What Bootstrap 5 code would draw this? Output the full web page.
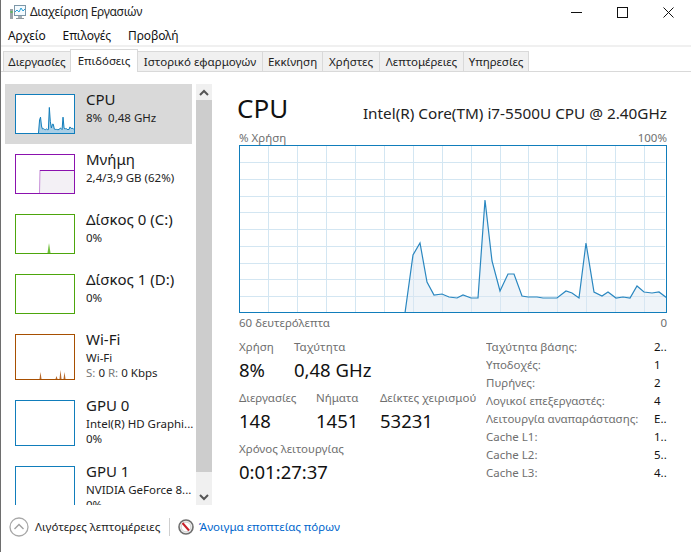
<!DOCTYPE html>
<html lang="el">
<head>
<meta charset="utf-8">
<title>Διαχείριση Εργασιών</title>
<link href="https://cdn.jsdelivr.net/npm/bootstrap@5.3.0/dist/css/bootstrap.min.css" rel="stylesheet">
<style>
html,body{margin:0;height:552px;overflow:hidden;background:#fff}
body{font-family:"Noto Sans","Open Sans","Liberation Sans",sans-serif;font-size:11.5px;line-height:16px;color:#111}
.tm-win{width:691px;height:552px;border-left:1px solid #6e6e6e;background:#fff;overflow:hidden}
.tm-title{height:26px;padding:0 0 2px 9px}
.tm-title-text{margin-left:4px;color:#222;font-size:12px;letter-spacing:-.3px}
.tm-ctl{width:46px;height:23px}
.tm-menu{height:19px;padding-left:7px;gap:17px;font-size:12px;letter-spacing:-.1px}
.tm-menu-sep{height:2px;background:#f0f0f0}
.tm-tabs{height:25px;padding-left:2px;align-items:flex-end;border-bottom:1px solid #d9d9d9;flex-wrap:nowrap}
.tm-tab{height:20px;background:#f0f0f0;border:1px solid #d9d9d9;border-bottom:0;margin-left:-1px;text-align:center;line-height:19px;color:#222;white-space:nowrap;overflow:hidden}
.tm-tab:nth-child(1){width:68px;margin-left:0}
.tm-tab:nth-child(2){width:68px;height:23px;background:#fff;margin-bottom:-1px;line-height:21px;position:relative}
.tm-tab:nth-child(3){width:126px}
.tm-tab:nth-child(4){width:61px}
.tm-tab:nth-child(5){width:58px}
.tm-tab:nth-child(6){width:85px}
.tm-tab:nth-child(7){width:66px}
.tm-body{height:433px}
.tm-side{width:195px;height:433px;padding:12px 0 0 4px;overflow:hidden;flex:none}
.tm-row{height:60px;padding:10px 0 0 10px;gap:11px;width:187px;flex:none}
.tm-row-tall{height:66px}
.tm-row-on{background:#d9d9d9}
.tm-thumb{width:60px;height:40px;border:1px solid;flex:none;display:block;background:#fff}
.tm-row-tall .tm-thumb{height:46px}
.tm-t-cpu,.tm-t-gpu{border-color:#117dbb}
.tm-t-mem{border-color:#8b12ae}
.tm-t-disk{border-color:#4da60c}
.tm-t-net{border-color:#a74f01}
.tm-info{margin-top:-5px;min-width:0;white-space:nowrap}
.tm-name{font-size:15px;line-height:21px;color:#1a1a1a}
.tm-sub{line-height:15px;color:#222}
.tm-mute{color:#777}
.tm-bar{width:16px;height:421px;margin-top:12px;background:#f0f0f0;flex:none}
.tm-bar-btn{height:16px}
.tm-bar-thumb{height:372px;background:#cdcdcd}
.tm-main{padding:18px 0 0 27px;width:455px;flex:none}
.tm-h{height:36px;align-items:center}
.tm-cpu{font-size:26px;line-height:36px;margin-left:-2px;color:#111}
.tm-model{font-size:15.3px;line-height:20px;color:#222;margin-top:9px;white-space:nowrap}
.tm-lbl{color:#6f6f6f;line-height:16px;white-space:nowrap}
.tm-lblrow{height:15px;margin-top:4px}
.tm-lblrow-b{height:17px;margin-top:2px}
.tm-chart{display:block;width:428px;height:168px}
.tm-stats{margin-top:7px;width:428px}
.tm-left{width:247px;flex:none}
.tm-grp{height:44px;margin-bottom:7px}
.tm-val{font-size:18.5px;line-height:26px;margin-top:2px;color:#111;white-space:nowrap}
.tm-w1{width:55px}
.tm-w2{width:77px}
.tm-w3{width:64px}
.tm-w4{width:100px}
.tm-spec{line-height:18px;color:#6f6f6f;width:181px;flex:none;margin-top:-1px}
.tm-spec-row{height:18px}
.tm-spec-k{width:168px;white-space:nowrap;overflow:hidden;flex:none}
.tm-spec-v{color:#111}
.tm-foot{height:47px;padding:0 0 3px 8px}
.tm-foot-t{margin-left:6px;color:#222;width:134px;white-space:nowrap}
.tm-vsep{width:1px;height:18px;background:#cfcfcf;margin-right:8px}
.tm-link{color:#06c;text-decoration:none;margin-left:5px;white-space:nowrap}
</style>
</head>
<body>
<div class="tm-win d-flex flex-column">
  <div class="tm-title d-flex align-items-center">
    <svg width="16" height="15" viewBox="0 0 16 15" aria-hidden="true"><rect x="0" y="4" width="3" height="10" fill="#9aa3a8"/><rect x="0.5" y="6" width="2" height="2" fill="#5fb85f"/><rect x="4.5" y="0.5" width="11" height="10" fill="#f4fbff" stroke="#7d97a8"/><polyline points="5,7 7,5 9,7 11,3 13,6 15,4" fill="none" stroke="#2a9fd8"/><rect x="8" y="11" width="4" height="2" fill="#a8b0b5"/><rect x="6" y="13" width="8" height="1" fill="#8d969b"/></svg>
    <span class="tm-title-text flex-grow-1">Διαχείριση Εργασιών</span>
    <div class="tm-ctl d-flex align-items-center justify-content-center"><svg width="11" height="11" viewBox="0 0 11 11"><path d="M0 5.5H11" stroke="#111"/></svg></div>
    <div class="tm-ctl d-flex align-items-center justify-content-center"><svg width="11" height="11" viewBox="0 0 11 11"><rect x=".5" y=".5" width="10" height="10" fill="none" stroke="#111"/></svg></div>
    <div class="tm-ctl d-flex align-items-center justify-content-center"><svg width="11" height="11" viewBox="0 0 11 11"><path d="M.5 .5L10.5 10.5M10.5 .5L.5 10.5" stroke="#111"/></svg></div>
  </div>
  <div class="tm-menu d-flex align-items-center"><span>Αρχείο</span><span>Επιλογές</span><span>Προβολή</span></div>
  <div class="tm-menu-sep"></div>
  <div class="tm-tabs nav d-flex">
    <div class="tm-tab">Διεργασίες</div>
    <div class="tm-tab">Επιδόσεις</div>
    <div class="tm-tab">Ιστορικό εφαρμογών</div>
    <div class="tm-tab">Εκκίνηση</div>
    <div class="tm-tab">Χρήστες</div>
    <div class="tm-tab">Λεπτομέρειες</div>
    <div class="tm-tab">Υπηρεσίες</div>
  </div>
  <div class="tm-body d-flex">
    <div class="tm-side d-flex flex-column">
      <div class="tm-row tm-row-on d-flex">
        <svg class="tm-thumb tm-t-cpu" viewBox="239 146 428 168" preserveAspectRatio="none"><polygon fill="#a9cfe6" points="405,314 413,256 420,244 427,283 434,296 442,295 449,298 457,299 463,296 471,299 478,299 485,201 492,262 500,292 508,275 514,275 522,297 528,298 537,298 543,299 557,299 566,292 572,294 579,299 586,244 594,293 602,297 608,293 616,299 623,298 630,299 637,287 644,293 652,294 659,293 667,299 667,314"/><polyline fill="none" stroke="#117dbb" vector-effect="non-scaling-stroke" points="405,314 413,256 420,244 427,283 434,296 442,295 449,298 457,299 463,296 471,299 478,299 485,201 492,262 500,292 508,275 514,275 522,297 528,298 537,298 543,299 557,299 566,292 572,294 579,299 586,244 594,293 602,297 608,293 616,299 623,298 630,299 637,287 644,293 652,294 659,293 667,299"/></svg>
        <div class="tm-info"><div class="tm-name">CPU</div><div class="tm-sub">8%&nbsp; 0,48 GHz</div></div>
      </div>
      <div class="tm-row d-flex">
        <svg class="tm-thumb tm-t-mem" viewBox="0 0 58 38"><polygon points="23,38 24,15 58,15 58,38" fill="#f3f0f5"/><path d="M23.500 38L24 15" stroke="#c78fd8" fill="none"/><path d="M24 15.500H58" stroke="#8b12ae" fill="none"/></svg>
        <div class="tm-info"><div class="tm-name">Μνήμη</div><div class="tm-sub">2,4/3,9 GB (62%)</div></div>
      </div>
      <div class="tm-row d-flex">
        <svg class="tm-thumb tm-t-disk" viewBox="0 0 58 38"><polygon points="31.500,38 33,28 34.500,38" fill="#6fbe3a"/></svg>
        <div class="tm-info"><div class="tm-name">Δίσκος 0 (C:)</div><div class="tm-sub">0%</div></div>
      </div>
      <div class="tm-row d-flex">
        <svg class="tm-thumb tm-t-disk" viewBox="0 0 58 38"></svg>
        <div class="tm-info"><div class="tm-name">Δίσκος 1 (D:)</div><div class="tm-sub">0%</div></div>
      </div>
      <div class="tm-row tm-row-tall d-flex">
        <svg class="tm-thumb tm-t-net" viewBox="0 0 58 44"><path d="M23.500 44L24.500 37L25.500 44ZM39.500 44L40.500 41L41.500 44ZM43.500 44L44.500 35L45.500 44ZM47.500 44L48.500 37L49.500 44Z" fill="#b8692c"/></svg>
        <div class="tm-info"><div class="tm-name">Wi-Fi</div><div class="tm-sub">Wi-Fi</div><div class="tm-sub"><span class="tm-mute">S:</span> 0 <span class="tm-mute">R:</span> 0 Kbps</div></div>
      </div>
      <div class="tm-row tm-row-tall d-flex">
        <svg class="tm-thumb tm-t-gpu" viewBox="0 0 58 44"></svg>
        <div class="tm-info"><div class="tm-name">GPU 0</div><div class="tm-sub">Intel(R) HD Graphi...</div><div class="tm-sub">0%</div></div>
      </div>
      <div class="tm-row tm-row-tall d-flex">
        <svg class="tm-thumb tm-t-gpu" viewBox="0 0 58 44"></svg>
        <div class="tm-info"><div class="tm-name">GPU 1</div><div class="tm-sub">NVIDIA GeForce 8...</div><div class="tm-sub">0%</div></div>
      </div>
    </div>
    <div class="tm-bar d-flex flex-column">
      <div class="tm-bar-btn d-flex align-items-center justify-content-center"><svg width="10" height="7" viewBox="0 0 10 7"><path d="M1 6L5 2L9 6" fill="none" stroke="#555" stroke-width="2"/></svg></div>
      <div class="tm-bar-thumb"></div>
      <div class="flex-grow-1"></div>
      <div class="tm-bar-btn d-flex align-items-center justify-content-center"><svg width="10" height="7" viewBox="0 0 10 7"><path d="M1 1L5 5L9 1" fill="none" stroke="#555" stroke-width="2"/></svg></div>
    </div>
    <div class="tm-main">
      <div class="tm-h d-flex justify-content-between"><div class="tm-cpu">CPU</div><div class="tm-model">Intel(R) Core(TM) i7-5500U CPU @ 2.40GHz</div></div>
      <div class="tm-lblrow d-flex justify-content-between tm-lbl"><span>% Χρήση</span><span>100%</span></div>
      <svg class="tm-chart" viewBox="239 146 428 168">
        <path d="M268.500 147V313M297.500 147V313M326.500 147V313M355.500 147V313M384.500 147V313M413.500 147V313M442.500 147V313M471.500 147V313M500.500 147V313M528.500 147V313M557.500 147V313M586.500 147V313M615.500 147V313M644.500 147V313M240 163.500H665M240 180.500H665M240 197.500H665M240 213.500H665M240 230.500H665M240 247.500H665M240 264.500H665M240 280.500H665M240 297.500H665" stroke="#d3e6f2" fill="none"/>
        <polygon fill="#dbe7f1" fill-opacity=".45" points="405,314 413,256 420,244 427,283 434,296 442,295 449,298 457,299 463,296 471,299 478,299 485,201 492,262 500,292 508,275 514,275 522,297 528,298 537,298 543,299 557,299 566,292 572,294 579,299 586,244 594,293 602,297 608,293 616,299 623,298 630,299 637,287 644,293 652,294 659,293 667,299 667,314"/>
        <polyline fill="none" stroke="#2a87c0" stroke-width="1.200" points="405,314 413,256 420,244 427,283 434,296 442,295 449,298 457,299 463,296 471,299 478,299 485,201 492,262 500,292 508,275 514,275 522,297 528,298 537,298 543,299 557,299 566,292 572,294 579,299 586,244 594,293 602,297 608,293 616,299 623,298 630,299 637,287 644,293 652,294 659,293 667,299"/>
        <rect x="239.500" y="146.500" width="427" height="167" fill="none" stroke="#117dbb"/>
      </svg>
      <div class="d-flex justify-content-between tm-lbl tm-lblrow-b"><span>60 δευτερόλεπτα</span><span>0</span></div>
      <div class="tm-stats d-flex">
        <div class="tm-left">
          <div class="tm-grp d-flex">
            <div class="tm-w1"><div class="tm-lbl">Χρήση</div><div class="tm-val">8%</div></div>
            <div><div class="tm-lbl">Ταχύτητα</div><div class="tm-val">0,48 GHz</div></div>
          </div>
          <div class="tm-grp d-flex">
            <div class="tm-w2"><div class="tm-lbl">Διεργασίες</div><div class="tm-val">148</div></div>
            <div class="tm-w3"><div class="tm-lbl">Νήματα</div><div class="tm-val">1451</div></div>
            <div class="tm-w4"><div class="tm-lbl">Δείκτες χειρισμού</div><div class="tm-val">53231</div></div>
          </div>
          <div class="tm-grp"><div class="tm-lbl">Χρόνος λειτουργίας</div><div class="tm-val">0:01:27:37</div></div>
        </div>
        <div class="tm-spec">
          <div class="tm-spec-row d-flex"><div class="tm-spec-k">Ταχύτητα βάσης:</div><div class="tm-spec-v">2..</div></div>
          <div class="tm-spec-row d-flex"><div class="tm-spec-k">Υποδοχές:</div><div class="tm-spec-v">1</div></div>
          <div class="tm-spec-row d-flex"><div class="tm-spec-k">Πυρήνες:</div><div class="tm-spec-v">2</div></div>
          <div class="tm-spec-row d-flex"><div class="tm-spec-k">Λογικοί επεξεργαστές:</div><div class="tm-spec-v">4</div></div>
          <div class="tm-spec-row d-flex"><div class="tm-spec-k">Λειτουργία αναπαράστασης:</div><div class="tm-spec-v">Ε..</div></div>
          <div class="tm-spec-row d-flex"><div class="tm-spec-k">Cache L1:</div><div class="tm-spec-v">1..</div></div>
          <div class="tm-spec-row d-flex"><div class="tm-spec-k">Cache L2:</div><div class="tm-spec-v">5..</div></div>
          <div class="tm-spec-row d-flex"><div class="tm-spec-k">Cache L3:</div><div class="tm-spec-v">4..</div></div>
        </div>
      </div>
    </div>
  </div>
  <div class="tm-foot d-flex align-items-center">
    <svg width="20" height="20" viewBox="0 0 20 20"><circle cx="10" cy="10" r="9" fill="#fff" stroke="#a8a8a8" stroke-width="1.300"/><path d="M5.500 12L10 7.500L14.500 12" fill="none" stroke="#a0a0a0" stroke-width="1.400"/></svg>
    <span class="tm-foot-t">Λιγότερες λεπτομέρειες</span>
    <span class="tm-vsep"></span>
    <svg width="16" height="16" viewBox="0 0 16 16"><circle cx="8" cy="8" r="7" fill="#eee" stroke="#6e6e6e" stroke-width="1.600"/><circle cx="8" cy="8" r="4.800" fill="#fff" stroke="#bbb" stroke-width=".6"/><path d="M4.500 4L11 11.500" stroke="#c8202a" stroke-width="2"/></svg>
    <a class="tm-link" href="#">Άνοιγμα εποπτείας πόρων</a>
  </div>
</div>
</body>
</html>
